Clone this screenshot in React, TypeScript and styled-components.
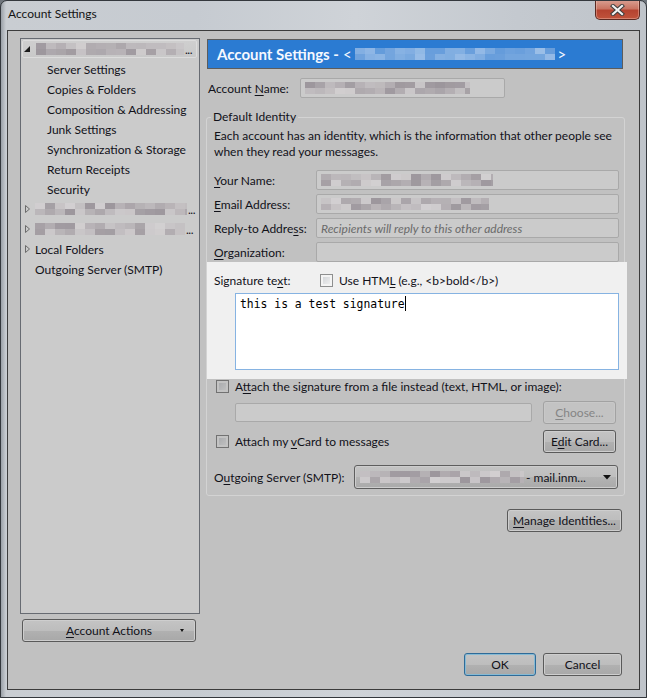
import React from 'react'
import styled, { createGlobalStyle, css } from 'styled-components'

const GlobalStyle = createGlobalStyle`
  html, body {
    margin: 0;
    padding: 0;
  }
  body {
    width: 647px;
    height: 698px;
    overflow: hidden;
    background: #6f757c;
    font-family: Lato, "Open Sans", sans-serif;
    font-size: 12px;
    color: #111119;
  }
`

const Window = styled.div`
  position: relative;
  width: 647px;
  height: 698px;
  box-sizing: border-box;
  display: flex;
  flex-direction: column;
  border: 1px solid #34383d;
  border-radius: 7px 7px 0 0;
  background: linear-gradient(
    to right,
    #9aa0a7 0px,
    #c9cdd2 5px,
    #c6cbd1 30%,
    #cfd3d8 55%,
    #c4c9cf 80%,
    #bfc4ca 100%
  );
  overflow: hidden;
`

const TitleBar = styled.div`
  height: 29px;
  flex: none;
  display: flex;
  align-items: flex-start;
  justify-content: space-between;
  padding: 0 6px 0 7px;
`

const Title = styled.div`
  margin-top: 5px;
  font-size: 12px;
  color: #141414;
`

const CloseButton = styled.div`
  margin-top: -1px;
  width: 45px;
  height: 20px;
  box-sizing: border-box;
  display: flex;
  align-items: center;
  justify-content: center;
  border: 1px solid #5b2a22;
  border-top: none;
  border-radius: 0 0 5px 5px;
  background: linear-gradient(#d9a093 0%, #c97563 45%, #b54330 55%, #c0533b 100%);
  box-shadow: inset 0 0 0 1px rgba(255, 220, 210, 0.35);
`

const Client = styled.div`
  flex: 1;
  margin: 0 6px 7px 6px;
  display: flex;
  flex-direction: column;
  border: 1px solid #3c3c3c;
  background: #c1c1c1;
  padding: 7px 14px 13px 12px;
`

const Body = styled.div`
  flex: 1;
  display: flex;
  gap: 6px;
  min-height: 0;
`

const LeftCol = styled.div`
  width: 180px;
  flex: none;
  display: flex;
  flex-direction: column;
  gap: 5px;
`

const Tree = styled.div`
  flex: 1;
  box-sizing: border-box;
  border: 1px solid #676b72;
  background: #cbcbcb;
`

const TreeRow = styled.div<{ $level?: number; $selected?: boolean }>`
  height: 20px;
  box-sizing: border-box;
  display: flex;
  align-items: center;
  white-space: nowrap;
  padding-left: ${(p) => (p.$level ? 26 : 2)}px;
  ${(p) =>
    p.$selected &&
    css`
      height: 18px;
      margin: 1px 2px 1px 1px;
      padding-left: 0;
      border: 1px solid #dcdcdc;
      border-radius: 2px;
      background: linear-gradient(#cfcfcf, #c9c9c9);
    `}
`

const TwistyBox = styled.span<{ $wide?: boolean }>`
  width: ${(p) => (p.$wide ? 13 : 12)}px;
  flex: none;
  display: flex;
  align-items: center;
`

const Ellipsis = styled.span`
  margin-left: 1px;
  letter-spacing: -0.5px;
`

const RightCol = styled.div`
  flex: 1;
  display: flex;
  flex-direction: column;
  min-width: 0;
`

const Header = styled.div`
  height: 30px;
  box-sizing: border-box;
  margin: 1px 2px 0 1px;
  display: flex;
  align-items: center;
  padding-left: 9px;
  border: 1px solid #5c5c5c;
  background: #2b7bd2;
  color: #f4f8ff;
  font-weight: 700;
  font-size: 15px;
  white-space: nowrap;
`

const HeaderTail = styled.span`
  font-weight: 400;
  margin-left: 4px;
  display: flex;
  align-items: center;
  gap: 3px;
`

const NameRow = styled.div`
  margin-top: 9px;
  height: 20px;
  display: flex;
  align-items: center;
`

const Label = styled.label<{ $width?: number; $inset?: number }>`
  flex: none;
  width: ${(p) => p.$width ?? 100}px;
  margin-left: ${(p) => p.$inset ?? 0}px;
  white-space: nowrap;
`

const TextBox = styled.div<{ $width?: number; $height?: number }>`
  ${(p) => (p.$width ? `width: ${p.$width}px; flex: none;` : 'flex: 1;')}
  height: ${(p) => p.$height ?? 20}px;
  box-sizing: border-box;
  display: flex;
  align-items: center;
  padding-left: 4px;
  border: 1px solid #a9a9a9;
  border-radius: 2px;
  background: #cbcbcb;
  white-space: nowrap;
  overflow: hidden;
`

const Placeholder = styled.span`
  font-style: italic;
  color: #6a6a6a;
`

const GroupBox = styled.fieldset`
  margin: 11px 0 0 0;
  padding: 0 5px 6px 7px;
  border: 1px solid #d3d3d3;
  border-radius: 3px;
  min-width: 0;
`

const Legend = styled.legend`
  padding: 0 2px;
  margin-left: -3px;
  line-height: 16px;
`

const Description = styled.p`
  margin: 3px 0 0 0;
  line-height: 16px;
`

const FieldList = styled.div`
  margin-top: 10px;
  display: flex;
  flex-direction: column;
  gap: 4px;
`

const FieldRow = styled.div`
  height: 20px;
  display: flex;
  align-items: center;
`

const Highlight = styled.div`
  position: relative;
  margin: 0 -8px 0 -7px;
  padding: 10px 8px 9px 7px;
  background: #f0f0f0;
`

const SigRow = styled.div`
  height: 16px;
  display: flex;
  align-items: center;
`

const CheckLine = styled.label`
  display: flex;
  align-items: center;
  gap: 6px;
  white-space: nowrap;
`

const CheckBox = styled.span<{ $lit?: boolean }>`
  width: 13px;
  height: 13px;
  flex: none;
  box-sizing: border-box;
  border: 1px solid ${(p) => (p.$lit ? '#8e8f8f' : '#727272')};
  background: ${(p) =>
    p.$lit
      ? 'linear-gradient(135deg, #cdd0d4, #f5f5f5)'
      : 'linear-gradient(135deg, #a5a7aa, #c4c4c4)'};
  box-shadow: inset 0 0 0 2px ${(p) => (p.$lit ? '#f4f4f4' : '#c3c3c3')};
`

const SignatureArea = styled.div`
  margin: 5px 0 0 21px;
  height: 77px;
  box-sizing: border-box;
  border: 1px solid #86b3e2;
  background: #ffffff;
  padding: 3px 0 0 4px;
  font-family: "DejaVu Sans Mono", "Liberation Mono", monospace;
  font-size: 11.4px;
  color: #000;
  display: flex;
  align-items: flex-start;
`

const Caret = styled.span`
  display: inline-block;
  width: 1px;
  height: 15px;
  margin-top: -1px;
  background: #000;
`

const AttachRow = styled.div`
  height: 16px;
  margin-top: -1px;
  display: flex;
  align-items: center;
  padding-left: 2px;
`

const FileRow = styled.div`
  margin: 7px 3px 0 21px;
  height: 23px;
  display: flex;
  align-items: center;
  justify-content: space-between;
`

const CardRow = styled.div`
  margin: 6px 3px 0 0;
  height: 23px;
  display: flex;
  align-items: center;
  justify-content: space-between;
  padding-left: 2px;
`

const SmtpRow = styled.div`
  margin-top: 12px;
  height: 24px;
  display: flex;
  align-items: center;
`

const Dropdown = styled.div`
  width: 264px;
  height: 24px;
  box-sizing: border-box;
  display: flex;
  align-items: center;
  padding: 0 6px 0 5px;
  border: 1px solid #5e5e5e;
  border-radius: 3px;
  background: linear-gradient(#c4c4c4 0%, #bebebe 50%, #b3b3b3 50%, #aaaaaa 100%);
  box-shadow: inset 0 0 0 1px #cdcdcd;
  white-space: nowrap;
`

const DropdownText = styled.span`
  flex: 1;
  display: flex;
  align-items: center;
  gap: 2px;
`

const Button = styled.div<{ $width: number; $default?: boolean; $disabled?: boolean }>`
  width: ${(p) => p.$width}px;
  height: 23px;
  flex: none;
  box-sizing: border-box;
  display: flex;
  align-items: center;
  justify-content: center;
  border-radius: 3px;
  white-space: nowrap;
  border: 1px solid ${(p) => (p.$default ? '#2f6b98' : p.$disabled ? '#a2a2a2' : '#5a5a5a')};
  background: ${(p) =>
    p.$disabled
      ? '#c3c3c3'
      : 'linear-gradient(#c4c4c4 0%, #bdbdbd 50%, #b1b1b1 50%, #a8a8a8 100%)'};
  box-shadow: inset 0 0 0 1px
    ${(p) => (p.$default ? '#86bad4' : p.$disabled ? '#c8c8c8' : '#cecece')};
  color: ${(p) => (p.$disabled ? '#858585' : '#111119')};
`

const ManageRow = styled.div`
  margin: 13px 3px 0 0;
  display: flex;
  justify-content: flex-end;
`

const ActionsButton = styled(Button)`
  margin-left: 2px;
  position: relative;
`

const ActionsArrow = styled.span`
  position: absolute;
  right: 11px;
  top: 9px;
  width: 0;
  height: 0;
  border-left: 2.5px solid transparent;
  border-right: 2.5px solid transparent;
  border-top: 3px solid #111;
`

const Footer = styled.div`
  margin: 11px 3px 0 0;
  display: flex;
  justify-content: flex-end;
  gap: 7px;
`

const U = styled.span`
  text-decoration: underline;
  text-underline-offset: 2px;
`

const MosaicSvg = styled.svg`
  display: block;
  flex: none;
`

type MosaicProps = {
  width: number
  seed: number
  tone?: 'gray' | 'blue'
}

// pixelated block standing in for private names and addresses
function Mosaic({ width, seed, tone = 'gray' }: MosaicProps) {
  const cols = Math.ceil(width / 10)
  let s = seed * 7919 + 17
  const rnd = () => {
    s = (s * 9301 + 49297) % 233280
    return s / 233280
  }
  const cells: React.ReactNode[] = []
  for (let r = 0; r < 2; r++) {
    for (let c = 0; c < cols; c++) {
      const v = rnd()
      const fill =
        tone === 'blue'
          ? `hsl(212, 62%, ${62 + v * 14}%)`
          : `hsl(${300 + v * 30}, 3%, ${60 + v * 22}%)`
      cells.push(
        <rect key={`${r}-${c}`} x={c * 10} y={r * 6} width={10} height={6} fill={fill} />
      )
    }
  }
  return (
    <MosaicSvg width={width} height={12} viewBox={`0 0 ${width} 12`}>
      {cells}
    </MosaicSvg>
  )
}

function Twisty({ open }: { open?: boolean }) {
  return (
    <TwistyBox $wide={open}>
      {open ? (
        <svg width="8" height="8" viewBox="0 0 8 8">
          <path d="M7 1 L7 7 L1 7 Z" fill="#1b1b1b" />
        </svg>
      ) : (
        <svg width="8" height="10" viewBox="0 0 8 10">
          <path d="M2.5 1.5 L6.5 5 L2.5 8.5 Z" fill="none" stroke="#6b6b6b" />
        </svg>
      )}
    </TwistyBox>
  )
}

function CloseGlyph() {
  return (
    <svg width="15" height="12" viewBox="0 0 15 12">
      <path d="M3 2 L12 10 M12 2 L3 10" stroke="#3d3d3d" strokeWidth="4.2" strokeLinecap="square" />
      <path d="M3 2 L12 10 M12 2 L3 10" stroke="#f2f2f2" strokeWidth="2.2" strokeLinecap="square" />
    </svg>
  )
}

function DropArrow() {
  return (
    <svg width="8" height="5" viewBox="0 0 8 5">
      <path d="M0 0 L8 0 L4 4.5 Z" fill="#111" />
    </svg>
  )
}

const subItems = [
  'Server Settings',
  'Copies & Folders',
  'Composition & Addressing',
  'Junk Settings',
  'Synchronization & Storage',
  'Return Receipts',
  'Security',
]

export default function App() {
  return (
    <>
      <GlobalStyle />
      <Window>
        <TitleBar>
          <Title>Account Settings</Title>
          <CloseButton>
            <CloseGlyph />
          </CloseButton>
        </TitleBar>
        <Client>
          <Body>
            <LeftCol>
              <Tree>
                <TreeRow $selected>
                  <Twisty open />
                  <Mosaic width={148} seed={3} />
                  <Ellipsis>...</Ellipsis>
                </TreeRow>
                {subItems.map((item) => (
                  <TreeRow key={item} $level={1}>
                    {item}
                  </TreeRow>
                ))}
                <TreeRow>
                  <Twisty />
                  <Mosaic width={152} seed={11} />
                  <Ellipsis>...</Ellipsis>
                </TreeRow>
                <TreeRow>
                  <Twisty />
                  <Mosaic width={150} seed={29} />
                  <Ellipsis>...</Ellipsis>
                </TreeRow>
                <TreeRow>
                  <Twisty />
                  Local Folders
                </TreeRow>
                <TreeRow>
                  <TwistyBox />
                  Outgoing Server (SMTP)
                </TreeRow>
              </Tree>
              <ActionsButton $width={174}>
                <span>
                  <U>A</U>ccount Actions
                </span>
                <ActionsArrow />
              </ActionsButton>
            </LeftCol>

            <RightCol>
              <Header>
                Account Settings -
                <HeaderTail>
                  &lt;
                  <Mosaic width={200} seed={5} tone="blue" />
                  &gt;
                </HeaderTail>
              </Header>

              <NameRow>
                <Label $width={92} $inset={2}>
                  Account <U>N</U>ame:
                </Label>
                <TextBox $width={205}>
                  <Mosaic width={165} seed={41} />
                </TextBox>
              </NameRow>

              <GroupBox>
                <Legend>Default Identity</Legend>
                <Description>
                  Each account has an identity, which is the information that other people see
                  <br />
                  when they read your messages.
                </Description>

                <FieldList>
                  <FieldRow>
                    <Label $width={102}>
                      <U>Y</U>our Name:
                    </Label>
                    <TextBox>
                      <Mosaic width={172} seed={17} />
                    </TextBox>
                  </FieldRow>
                  <FieldRow>
                    <Label $width={102}>
                      <U>E</U>mail Address:
                    </Label>
                    <TextBox>
                      <Mosaic width={168} seed={23} />
                    </TextBox>
                  </FieldRow>
                  <FieldRow>
                    <Label $width={102}>
                      Reply-to Addre<U>s</U>s:
                    </Label>
                    <TextBox>
                      <Placeholder>Recipients will reply to this other address</Placeholder>
                    </TextBox>
                  </FieldRow>
                  <FieldRow>
                    <Label $width={102}>
                      <U>O</U>rganization:
                    </Label>
                    <TextBox />
                  </FieldRow>
                </FieldList>

                <Highlight>
                  <SigRow>
                    <Label $width={106}>
                      Signature te<U>x</U>t:
                    </Label>
                    <CheckLine>
                      <CheckBox $lit />
                      <span>
                        Use HTM<U>L</U> (e.g., &lt;b&gt;bold&lt;/b&gt;)
                      </span>
                    </CheckLine>
                  </SigRow>
                  <SignatureArea>
                    this is a test signature
                    <Caret />
                  </SignatureArea>
                </Highlight>

                <AttachRow>
                  <CheckLine>
                    <CheckBox />
                    <span>
                      A<U>t</U>tach the signature from a file instead (text, HTML, or image):
                    </span>
                  </CheckLine>
                </AttachRow>

                <FileRow>
                  <TextBox $width={297} $height={19} />
                  <Button $width={73} $disabled>
                    <span>
                      <U>C</U>hoose...
                    </span>
                  </Button>
                </FileRow>

                <CardRow>
                  <CheckLine>
                    <CheckBox />
                    <span>
                      Attach my <U>v</U>Card to messages
                    </span>
                  </CheckLine>
                  <Button $width={73}>
                    <span>
                      E<U>d</U>it Card...
                    </span>
                  </Button>
                </CardRow>

                <SmtpRow>
                  <Label $width={140}>
                    O<U>u</U>tgoing Server (SMTP):
                  </Label>
                  <Dropdown>
                    <DropdownText>
                      <Mosaic width={164} seed={61} />
                      <span>- mail.inm...</span>
                    </DropdownText>
                    <DropArrow />
                  </Dropdown>
                </SmtpRow>
              </GroupBox>

              <ManageRow>
                <Button $width={115}>
                  <span>
                    <U>M</U>anage Identities...
                  </span>
                </Button>
              </ManageRow>
            </RightCol>
          </Body>

          <Footer>
            <Button $width={72} $default>
              OK
            </Button>
            <Button $width={79}>Cancel</Button>
          </Footer>
        </Client>
      </Window>
    </>
  )
}
